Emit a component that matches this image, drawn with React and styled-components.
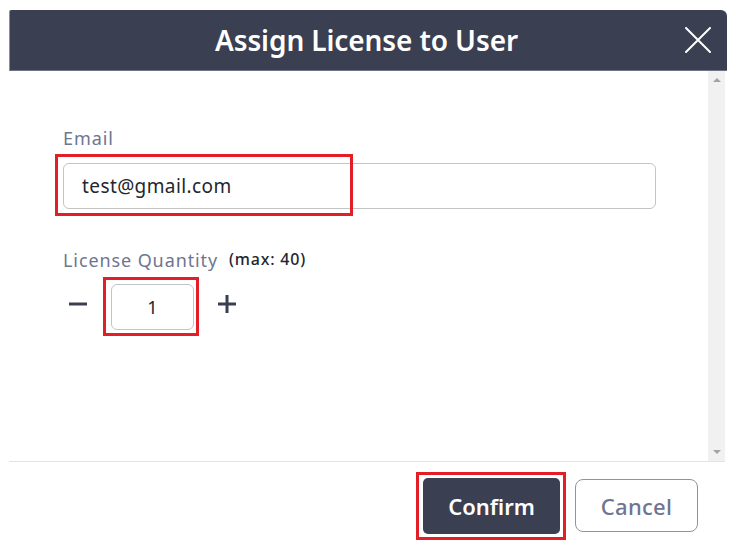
import React from "react";
import styled, { createGlobalStyle } from "styled-components";

const GlobalStyle = createGlobalStyle`
  html, body {
    margin: 0;
    padding: 0;
    background: #ffffff;
  }
  body {
    font-family: "Noto Sans", "Open Sans", sans-serif;
  }
`;

const Page = styled.div`
  padding: 10px 9px 0 9px;
  width: 736px;
  height: 553px;
  box-sizing: border-box;
`;

const Dialog = styled.div`
  width: 718px;
  height: 537px;
  display: flex;
  flex-direction: column;
  background: #fff;
`;

const Header = styled.div`
  height: 61px;
  flex: none;
  background: #3a3f51;
  border-left: 1px solid #8a8f9c;
  border-bottom: 1px solid #6f7484;
  border-top-right-radius: 6px;
  border-top-left-radius: 2px;
  display: flex;
  align-items: center;
  justify-content: center;
  position: relative;
  box-sizing: border-box;
`;

const Title = styled.h1`
  margin: 0 0 0 -4px;
  color: #ffffff;
  font-size: 28px;
  font-weight: 600;
  letter-spacing: -0.1px;
`;

const CloseButton = styled.button`
  position: absolute;
  right: 15px;
  top: 16px;
  width: 28px;
  height: 28px;
  padding: 0;
  border: none;
  background: none;
  cursor: pointer;
  display: flex;
  align-items: center;
  justify-content: center;
`;

const Middle = styled.div`
  flex: 1;
  display: flex;
  min-height: 0;
`;

const Body = styled.div`
  flex: 1;
  padding: 56px 52px 0 54px;
`;

const Scrollbar = styled.div`
  width: 17px;
  margin-right: 2px;
  background: #f1f1f1;
  display: flex;
  flex-direction: column;
  justify-content: space-between;
  align-items: center;
  padding: 7px 0;
`;

const Arrow = styled.div`
  width: 0;
  height: 0;
  border-left: 4px solid transparent;
  border-right: 4px solid transparent;
  ${(p) =>
    p.down
      ? "border-top: 4px solid #a3a3a3;"
      : "border-bottom: 4px solid #a3a3a3;"}
`;

const Field = styled.div`
  position: relative;
  margin-bottom: 40px;
`;

const LabelRow = styled.div`
  display: flex;
  align-items: baseline;
  gap: 11px;
  margin-bottom: 14px;
`;

const Label = styled.label`
  color: #6e7591;
  font-size: 18px;
  line-height: 22px;
  letter-spacing: 0.9px;
`;

const Hint = styled.span`
  color: #23262f;
  font-size: 16px;
  font-weight: 500;
  letter-spacing: 0.8px;
  position: relative;
  top: -2px;
`;

const TextInput = styled.input`
  display: block;
  width: 100%;
  height: 46px;
  box-sizing: border-box;
  border: 1px solid #c4c4c8;
  border-radius: 6px;
  padding: 0 18px;
  font-family: inherit;
  font-size: 19px;
  letter-spacing: 0.4px;
  color: #23262f;
  outline: none;
`;

const EmailMark = styled.div`
  position: absolute;
  left: -8px;
  top: 27px;
  width: 298px;
  height: 62px;
  box-sizing: border-box;
  border: 3px solid #e41e26;
  pointer-events: none;
`;

const Stepper = styled.div`
  display: flex;
  align-items: center;
  margin-top: -9px;
`;

const StepButton = styled.button`
  border: none;
  background: none;
  padding: 0;
  width: 24px;
  height: 24px;
  display: flex;
  align-items: center;
  justify-content: center;
  cursor: pointer;
  margin: ${(p) => p.margin};
`;

const Mark = styled.div`
  border: 3px solid #e41e26;
  padding: ${(p) => p.pad};
  display: flex;
`;

const QtyInput = styled.input`
  width: 83px;
  height: 46px;
  box-sizing: border-box;
  border: 1px solid #c4c4c8;
  border-radius: 6px;
  text-align: center;
  font-family: inherit;
  font-size: 18px;
  color: #23262f;
  outline: none;
  padding: 0;
`;

const Footer = styled.div`
  flex: none;
  height: 86px;
  border-top: 1px solid #e3e4ea;
  margin-right: 2px;
  display: flex;
  align-items: flex-start;
  justify-content: flex-end;
  padding: 10px 27px 0 0;
  gap: 9px;
  box-sizing: border-box;
`;

const PrimaryButton = styled.button`
  width: 137px;
  height: 56px;
  border: none;
  border-radius: 5px;
  background: #3a3f51;
  color: #ffffff;
  font-family: inherit;
  font-size: 22px;
  font-weight: 600;
  cursor: pointer;
`;

const SecondaryButton = styled.button`
  width: 123px;
  height: 53px;
  margin-top: 7px;
  border: 1px solid #8d92a8;
  border-radius: 8px;
  background: #ffffff;
  color: #6e7591;
  font-family: inherit;
  font-size: 22px;
  font-weight: 500;
  letter-spacing: 0.3px;
  cursor: pointer;
`;

const CloseIcon = () => (
  <svg width="26" height="26" viewBox="0 0 26 26">
    <path d="M1 1 L25 25 M25 1 L1 25" stroke="#fff" strokeWidth="2" strokeLinecap="round" />
  </svg>
);

const MinusIcon = () => (
  <svg width="20" height="20" viewBox="0 0 20 20">
    <path d="M1 10 H19" stroke="#3a3f51" strokeWidth="3" />
  </svg>
);

const PlusIcon = () => (
  <svg width="20" height="20" viewBox="0 0 20 20">
    <path d="M1 10 H19 M10 1 V19" stroke="#3a3f51" strokeWidth="3" />
  </svg>
);

const App = () => (
  <Page>
    <GlobalStyle />
    <Dialog>
      <Header>
        <Title>Assign License to User</Title>
        <CloseButton aria-label="Close">
          <CloseIcon />
        </CloseButton>
      </Header>
      <Middle>
        <Body>
          <Field>
            <LabelRow>
              <Label>Email</Label>
            </LabelRow>
            <TextInput defaultValue="test@gmail.com" />
            <EmailMark />
          </Field>
          <Field>
            <LabelRow>
              <Label>License Quantity</Label>
              <Hint>(max: 40)</Hint>
            </LabelRow>
            <Stepper>
              <StepButton margin="-5px 13px 0 3px" aria-label="Decrease">
                <MinusIcon />
              </StepButton>
              <Mark pad="4px 2px 3px 5px">
                <QtyInput defaultValue="1" />
              </Mark>
              <StepButton margin="-5px 0 0 16px" aria-label="Increase">
                <PlusIcon />
              </StepButton>
            </Stepper>
          </Field>
        </Body>
        <Scrollbar>
          <Arrow />
          <Arrow down />
        </Scrollbar>
      </Middle>
      <Footer>
        <Mark pad="3px 3px 3px 4px">
          <PrimaryButton>Confirm</PrimaryButton>
        </Mark>
        <SecondaryButton>Cancel</SecondaryButton>
      </Footer>
    </Dialog>
  </Page>
);

export default App;
